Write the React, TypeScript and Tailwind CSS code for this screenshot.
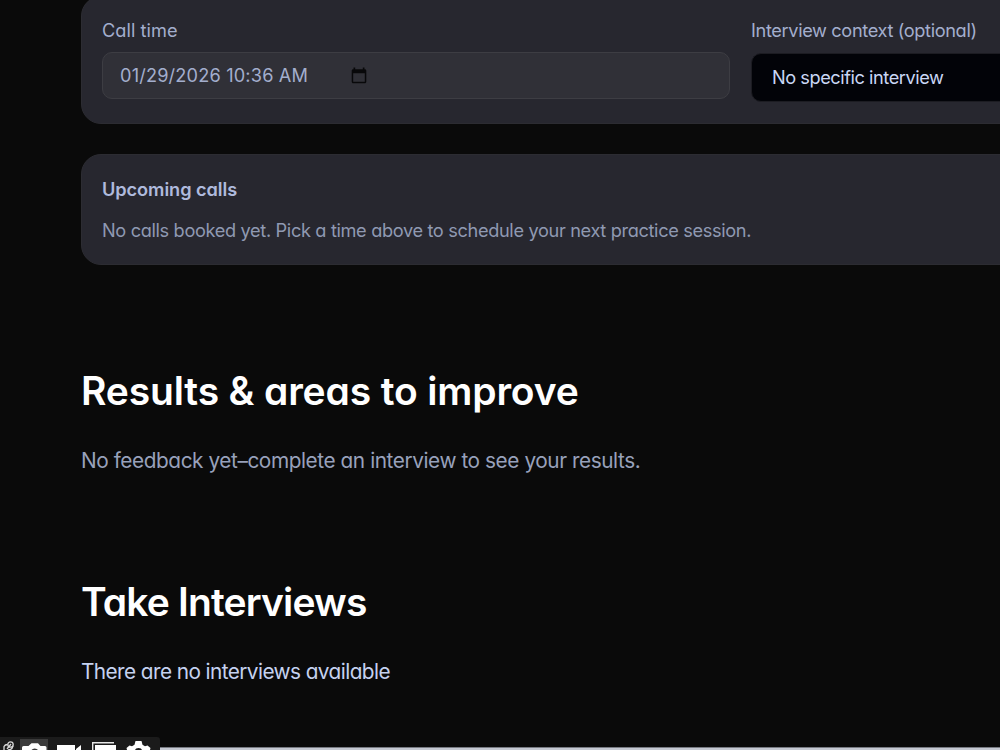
import type { ReactNode } from "react";

const SECTIONS = [
  {
    title: "Results & areas to improve",
    text: "No feedback yet–complete an interview to see your results.",
    titleClass: "tracking-[-0.15px]",
    textClass: "text-[#98a1bb] tracking-[-0.43px]",
  },
  {
    title: "Take Interviews",
    text: "There are no interviews available",
    titleClass: "tracking-[-0.84px]",
    textClass: "text-[#c5d2f0] tracking-[-0.58px]",
  },
];

function Card({ className, children }: { className: string; children: ReactNode }) {
  return (
    <div className={`w-[1320px] shrink-0 rounded-[20px] border border-[#2c2c32] bg-[#27272f] px-5 ${className}`}>
      {children}
    </div>
  );
}

function CalendarIcon() {
  return (
    <svg width="16" height="17" viewBox="0 0 16 17" className="ml-[43px] -mt-[2px]">
      <path
        fill="#08080a"
        fillRule="evenodd"
        d="M2.500 0.500h1.700v1.700h7.600V0.500h1.700v1.700h.3c.9 0 1.500.6 1.500 1.500v11.100c0 .9-.6 1.500-1.500 1.500H2.200c-.9 0-1.500-.6-1.500-1.500V3.700c0-.9.6-1.500 1.500-1.500h.3zM2.200 6.200v8.600h11.600V6.200z"
      />
    </svg>
  );
}

// Floating capture bar, cut off by the bottom of the window
function CaptureBar() {
  return (
    <div className="absolute left-0 top-[737px] h-[13px] w-[160px] overflow-hidden rounded-tr-[3px] bg-[#1b1b1b]">
      <svg width="160" height="13" viewBox="0 0 160 13">
        <rect x="20" y="2" width="28" height="11" fill="#3b3b3b" />
        <g fill="none" stroke="#d8d8d8" strokeWidth="1.3">
          <circle cx="10.500" cy="7.500" r="2.700" />
          <path d="M4 13V9.500q1-2 3.500-2M7 12l4-5M8 13q4 0 5-4" />
        </g>
        <g fill="#fff">
          <path d="M22 13v-2.500Q22 9 23.500 9h5L31.500 6.300h6.500L40.500 9h4.500q1.500 0 1.500 1.500V13z" />
          <path d="M57 8h18v5H57zM76 12l5-4v5h-5z" />
          <path d="M95 8h21v5H95z" />
          <path d="M127 13l-.5-2 3-2.500 2.500.7 2.500-1.500L135.500 4h6l1 3.700L145 9.200l2.500-.7 3 2.500-.5 2z" />
        </g>
        <path d="M31.500 13q1-1.500 3.200-1.500t3.300 1.500z" fill="#3b3b3b" />
        <path d="M92.700 13V5.700H114" fill="none" stroke="#e8e8e8" strokeWidth="1.4" />
        <path d="M135 13q.5-2 3.500-2t3.500 2z" fill="#1b1b1b" />
      </svg>
    </div>
  );
}

export default function App() {
  return (
    <div className="relative h-[750px] w-full overflow-hidden bg-[#0a0a0a] font-['Inter',sans-serif] [font-feature-settings:'cv11']">
      <main className="-mt-1 flex flex-col pl-[81px]">
        <Card className="flex h-32 gap-[21px] pt-[22px]">
          <div className="w-[628px] shrink-0">
            <div className="h-[29px] text-[18.2px] leading-[22px] tracking-[0.05px] text-[#a3aecd]">Call time</div>
            <div className="mt-1 flex h-[47px] items-center rounded-[10px] border border-[#3d3d43] bg-[#303037] pl-[17px] pt-px">
              <span className="text-[18.2px] tracking-[0.16px] text-[#a3aecd]">01/29/2026 10:36 AM</span>
              <CalendarIcon />
            </div>
          </div>
          <div className="w-[628px] shrink-0">
            <div className="h-[29px] text-[18.2px] leading-[22px] tracking-[-0.37px] text-[#a3aecd]">
              Interview context (optional)
            </div>
            <div className="mt-[5px] flex h-[49px] items-center rounded-[10px] border border-[#1c1c22] bg-[#020308] pl-5">
              <span className="text-[18.2px] tracking-[-0.45px] text-[#cad7f5]">No specific interview</span>
            </div>
          </div>
        </Card>

        <Card className="mt-[30px] h-[111px] pt-[22px]">
          <h3 className="text-[18.2px] font-semibold leading-[24px] tracking-[-0.07px] text-[#afbadd]">Upcoming calls</h3>
          <p className="mt-[17px] text-[18.2px] leading-[24px] tracking-[-0.35px] text-[#8f99b2]">
            No calls booked yet. Pick a time above to schedule your next practice session.
          </p>
        </Card>

        <div className="mt-[102px] flex flex-col gap-[104px]">
          {SECTIONS.map((s) => (
            <section key={s.title} className="h-[107px]">
              <h2 className={`text-[39px] font-semibold leading-[47px] text-white ${s.titleClass}`}>{s.title}</h2>
              <p className={`mt-8 text-[20.8px] leading-[29px] ${s.textClass}`}>{s.text}</p>
            </section>
          ))}
        </div>
      </main>

      <div className="absolute left-[160px] right-0 top-[747px] h-[3px] border-t border-[#777a82] bg-[#c5c9d2]" />
      <CaptureBar />
    </div>
  );
}
